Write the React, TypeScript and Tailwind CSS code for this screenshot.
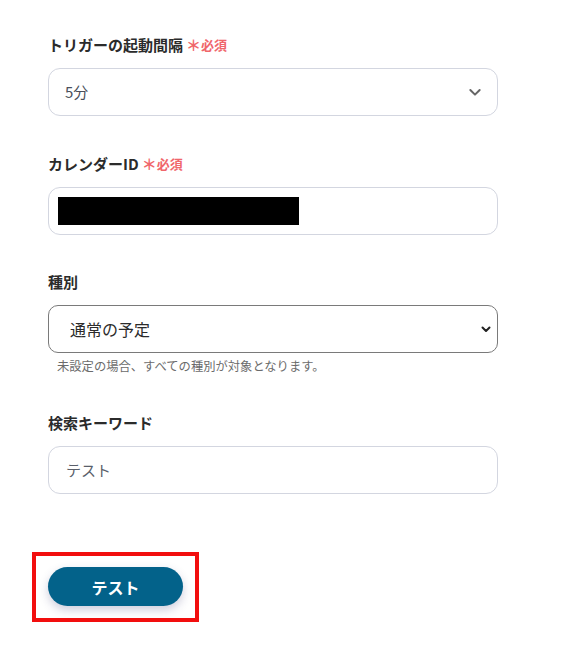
import React from "react";

const font = { fontFamily: '"Noto Sans CJK JP", "Noto Sans", sans-serif' };

function Label({ text, required }: { text: string; required?: boolean }) {
  return (
    <div className="flex items-center h-5 mb-[13px] leading-5">
      <span className="text-[15px] font-bold text-[#2b2b2b] leading-5">{text}</span>
      {required && (
        <span className="ml-[3px] flex items-center text-[#f0666b] leading-5">
          <span className="text-[15px] font-bold leading-5">＊</span>
          <span className="text-[13px] font-bold leading-5">必須</span>
        </span>
      )}
    </div>
  );
}

export default function App() {
  return (
    <div className="w-[562px] h-[648px] bg-white" style={font}>
      <div className="pl-[48px] pt-[35px] w-[498px]">
        <Label text="トリガーの起動間隔" required />
        <div className="h-[48px] rounded-[12px] border border-[#d3d6e0] flex items-center justify-between pl-[16px] pr-[14px]">
          <span className="text-[15px] text-[#4a4f5a] leading-5">5分</span>
          <svg width="16" height="16" viewBox="0 0 24 24" fill="none" stroke="#666" strokeWidth="3" strokeLinecap="round" strokeLinejoin="round">
            <path d="M5 9l7 7 7-7" />
          </svg>
        </div>

        <div className="mt-[38px]">
          <Label text="カレンダーID" required />
          <div className="h-[48px] rounded-[12px] border border-[#d3d6e0] flex items-center px-[9px]">
            <div className="w-[241px] h-[28px] bg-black" />
          </div>
        </div>

        <div className="mt-[37px]">
          <Label text="種別" />
          <div className="h-[48px] rounded-[10px] border border-[#7a7a7a] flex items-center justify-between pl-[21px] pr-[5px]">
            <span className="text-[16px] text-[#2b2b2b] leading-5">通常の予定</span>
            <svg width="12" height="12" viewBox="0 0 24 24" fill="none" stroke="#222" strokeWidth="4" strokeLinecap="round" strokeLinejoin="round">
              <path d="M5 9l7 7 7-7" />
            </svg>
          </div>
          <div className="mt-[5px] pl-[9px] text-[12.3px] leading-4 h-4 text-[#6b6b6b]">
            未設定の場合、すべての種別が対象となります。
          </div>
        </div>

        <div className="mt-[39px]">
          <Label text="検索キーワード" />
          <div className="h-[48px] rounded-[12px] border border-[#d3d6e0] flex items-center px-[17px]">
            <span className="text-[15px] text-[#5a5f6a] leading-5">テスト</span>
          </div>
        </div>

        <div className="mt-[58px] -ml-[16px] w-[167px] h-[70px] border-[4px] border-[#f20e0e] pl-[12px] pt-[11px]">
          <button className="w-[135px] h-[39px] rounded-full bg-[#03628a] text-white text-[16px] font-bold leading-5 shadow-[0_4px_10px_rgba(60,60,120,0.25)]">
            テスト
          </button>
        </div>
      </div>
    </div>
  );
}
